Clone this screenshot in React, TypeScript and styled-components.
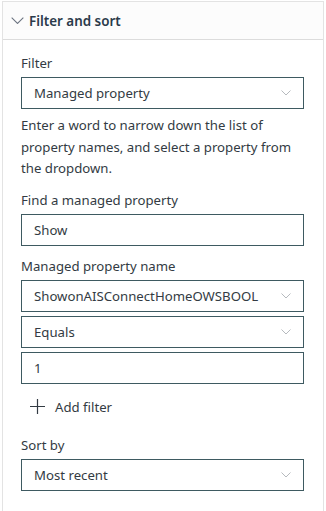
import React from "react";
import styled, { createGlobalStyle } from "styled-components";

const Global = createGlobalStyle`
  html, body { margin: 0; padding: 0; background: #ffffff; }
  body { font-family: "Noto Sans", "Open Sans", sans-serif; }
`;

const Pane = styled.div`
  box-sizing: border-box;
  width: 322px;
  height: 510px;
  margin: 1px 0 0 2px;
  border: 1px solid #e3e3e3;
  border-bottom: none;
  display: flex;
  flex-direction: column;
`;

const Header = styled.div`
  height: 37px;
  background: #fcfcfc;
  border-bottom: 1px solid #dcdcdc;
  display: flex;
  align-items: center;
  padding-left: 8px;
  gap: 5px;
  color: #2b3a4a;
  font-weight: 600;
  font-size: 13.4px;
`;

const Body = styled.div`
  display: flex;
  flex-direction: column;
  padding: 0 19px 0 18px;
`;

const Label = styled.div<{ $top?: number }>`
  font-size: 13.2px;
  color: #333b43;
  line-height: 20px;
  margin-top: ${(p) => p.$top ?? 0}px;
  margin-bottom: 4px;
`;

const Desc = styled.div`
  font-size: 13.2px;
  color: #333b43;
  line-height: 21.5px;
  margin-top: 6px;
`;

const Box = styled.div<{ $gap?: number }>`
  box-sizing: border-box;
  height: 32px;
  border: 1px solid #3e5a61;
  display: flex;
  align-items: center;
  justify-content: space-between;
  padding: 0 12px 0 12px;
  font-size: 13.2px;
  color: #333b43;
  margin-top: ${(p) => p.$gap ?? 0}px;
`;

const AddRow = styled.div`
  display: flex;
  align-items: center;
  gap: 10px;
  padding-left: 9px;
  margin-top: 11px;
  height: 24px;
  font-size: 13.2px;
  color: #333b43;
`;

const Chevron = ({ size = 10, color = "#a3a8ad" }: { size?: number; color?: string }) => (
  <svg width={size} height={size * 0.55} viewBox="0 0 20 11" fill="none">
    <path d="M1 1l9 9 9-9" stroke={color} strokeWidth="1.6" />
  </svg>
);

const Plus = () => (
  <svg width="15" height="15" viewBox="0 0 15 15" fill="none">
    <path d="M7.5 0v15M0 7.5h15" stroke="#333b43" strokeWidth="1.2" />
  </svg>
);

export default function App() {
  return (
    <>
      <Global />
      <Pane>
        <Header>
          <Chevron size={13} color="#6b7380" />
          <span>Filter and sort</span>
        </Header>
        <Body>
          <Label $top={13}>Filter</Label>
          <Box>
            <span>Managed property</span>
            <Chevron />
          </Box>
          <Desc>
            Enter a word to narrow down the list of property names, and select a property from the
            dropdown.
          </Desc>
          <Label $top={10}>Find a managed property</Label>
          <Box>
            <span>Show</span>
          </Box>
          <Label $top={10}>Managed property name</Label>
          <Box>
            <span>ShowonAISConnectHomeOWSBOOL</span>
            <Chevron />
          </Box>
          <Box $gap={4}>
            <span>Equals</span>
            <Chevron />
          </Box>
          <Box $gap={4}>
            <span>1</span>
          </Box>
          <AddRow>
            <Plus />
            <span>Add filter</span>
          </AddRow>
          <Label $top={16}>Sort by</Label>
          <Box>
            <span>Most recent</span>
            <Chevron />
          </Box>
        </Body>
      </Pane>
    </>
  );
}
